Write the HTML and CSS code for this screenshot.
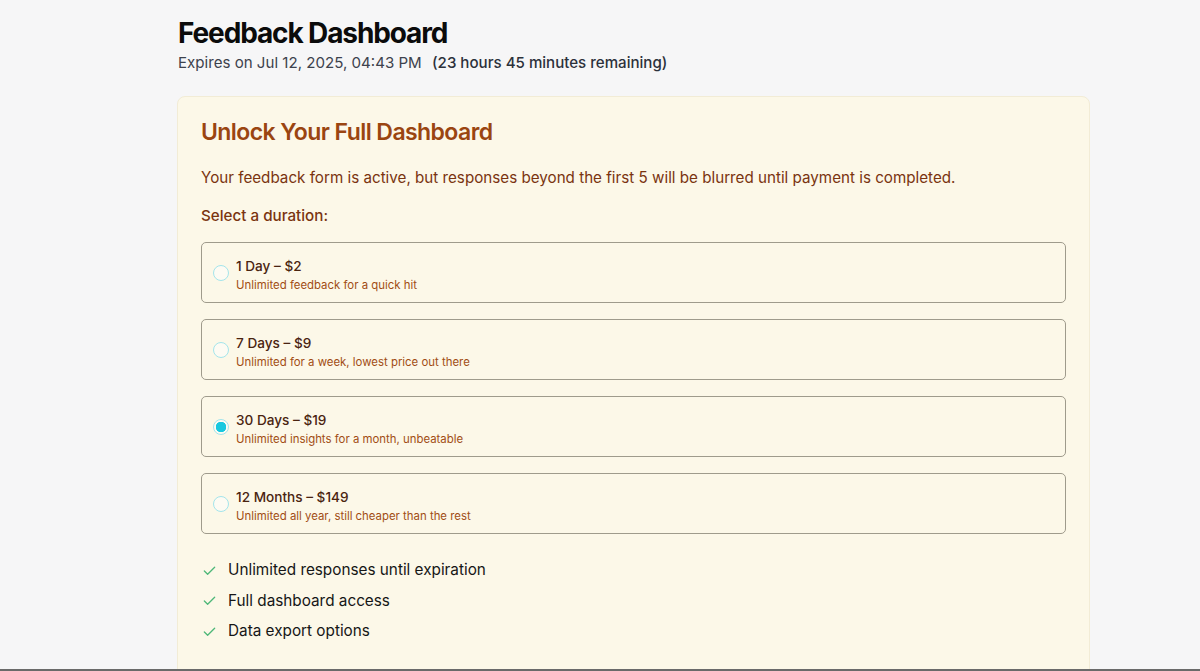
FILE: index.html
```html
<!DOCTYPE html>
<html lang="en">
<head>
<meta charset="utf-8">
<title>Feedback Dashboard</title>
<link rel="stylesheet" href="styles.css">
</head>
<body>
<main class="page">
  <header class="page-header">
    <h1 class="page-title">Feedback Dashboard</h1>
    <p class="expiry">Expires on Jul 12, 2025, 04:43 PM <span class="remaining">(23 hours 45 minutes remaining)</span></p>
  </header>

  <section class="unlock-card">
    <h2 class="unlock-title">Unlock Your Full Dashboard</h2>
    <p class="unlock-text">Your feedback form is active, but responses beyond the first 5 will be blurred until payment is completed.</p>
    <p class="select-label">Select a duration:</p>

    <div class="plans">
      <label class="plan">
        <input type="radio" name="plan" class="plan-radio">
        <span class="plan-info">
          <span class="plan-name">1 Day – $2</span>
          <span class="plan-desc">Unlimited feedback for a quick hit</span>
        </span>
      </label>
      <label class="plan">
        <input type="radio" name="plan" class="plan-radio">
        <span class="plan-info">
          <span class="plan-name">7 Days – $9</span>
          <span class="plan-desc">Unlimited for a week, lowest price out there</span>
        </span>
      </label>
      <label class="plan">
        <input type="radio" name="plan" class="plan-radio" checked>
        <span class="plan-info">
          <span class="plan-name">30 Days – $19</span>
          <span class="plan-desc">Unlimited insights for a month, unbeatable</span>
        </span>
      </label>
      <label class="plan">
        <input type="radio" name="plan" class="plan-radio">
        <span class="plan-info">
          <span class="plan-name">12 Months – $149</span>
          <span class="plan-desc">Unlimited all year, still cheaper than the rest</span>
        </span>
      </label>
    </div>

    <ul class="features">
      <li class="feature"><svg class="check" viewBox="0 0 16 16" width="15" height="15"><path d="M2.5 8.5l3.5 3.5 7.5-7.5" fill="none" stroke="currentColor" stroke-width="1.4" stroke-linecap="round" stroke-linejoin="round"/></svg>Unlimited responses until expiration</li>
      <li class="feature"><svg class="check" viewBox="0 0 16 16" width="15" height="15"><path d="M2.5 8.5l3.5 3.5 7.5-7.5" fill="none" stroke="currentColor" stroke-width="1.4" stroke-linecap="round" stroke-linejoin="round"/></svg>Full dashboard access</li>
      <li class="feature"><svg class="check" viewBox="0 0 16 16" width="15" height="15"><path d="M2.5 8.5l3.5 3.5 7.5-7.5" fill="none" stroke="currentColor" stroke-width="1.4" stroke-linecap="round" stroke-linejoin="round"/></svg>Data export options</li>
    </ul>
  </section>
</main>
<div class="window-edge"></div>
</body>
</html>
```

FILE: styles.css
```css
* { box-sizing: border-box; }

html, body {
  margin: 0;
  padding: 0;
  height: 100%;
  overflow: hidden;
}

body {
  background: #f6f6f7;
  font-family: Inter, "Noto Sans", "Liberation Sans", sans-serif;
  color: #1a1a1a;
}

.page {
  width: 913px;
  margin-left: 177px;
  padding-top: 16px;
}

.page-header {
  padding-left: 1px;
}

.page-title {
  margin: 0;
  font-size: 28px;
  line-height: 34px;
  font-weight: 700;
  letter-spacing: -0.04em;
  color: #0b0b0b;
}

.expiry {
  margin: 2px 0 0;
  font-size: 15.1px;
  line-height: 22px;
  color: #3d424d;
}

.remaining {
  margin-left: 6px;
  font-weight: 500;
  color: #2c313b;
}

.unlock-card {
  margin-top: 22px;
  background: #fcf8e8;
  border: 1px solid #f2ecd6;
  border-radius: 8px;
  padding: 21px 23px 40px;
}

.unlock-title {
  margin: 0;
  font-size: 23px;
  line-height: 28px;
  font-weight: 600;
  letter-spacing: -0.025em;
  color: #9a4511;
}

.unlock-text {
  margin: 20px 0 0;
  font-size: 15.2px;
  line-height: 24px;
  color: #7a3410;
}

.select-label {
  margin: 14px 0 0;
  font-size: 15.2px;
  line-height: 24px;
  font-weight: 500;
  color: #7a3410;
}

.plans {
  margin-top: 14px;
  display: flex;
  flex-direction: column;
  gap: 16px;
}

.plan {
  display: flex;
  align-items: center;
  gap: 7px;
  height: 61px;
  padding: 0 11px;
  border: 1px solid #9f9b8c;
  border-radius: 5px;
  cursor: pointer;
}

.plan-radio {
  appearance: none;
  -webkit-appearance: none;
  margin: 0;
  width: 16px;
  height: 16px;
  border: 1.5px solid #a4e5eb;
  border-radius: 50%;
  background: #fdfbf3;
  flex: none;
}

.plan-radio:checked {
  border-color: #a4e5eb;
  background: radial-gradient(circle, #18c8df 0 5px, #fdfbf3 5.5px);
}

.plan-info {
  display: flex;
  flex-direction: column;
  gap: 1px;
  padding-top: 4px;
}

.plan-name {
  font-size: 13.6px;
  line-height: 20px;
  font-weight: 500;
  color: #4a2410;
}

.plan-desc {
  font-size: 11.4px;
  line-height: 16px;
  color: #a14d14;
}

.features {
  list-style: none;
  margin: 24px 0 0;
  padding: 0;
  display: flex;
  flex-direction: column;
  gap: 6.5px;
}

.feature {
  display: flex;
  align-items: center;
  gap: 11px;
  font-size: 15.3px;
  line-height: 24px;
  color: #161616;
}

.check {
  color: #4fb879;
  margin-left: 1px;
  flex: none;
}

.window-edge {
  position: fixed;
  left: 0;
  right: 0;
  bottom: 0;
  height: 2px;
  background: #6a6a6a;
}
```
